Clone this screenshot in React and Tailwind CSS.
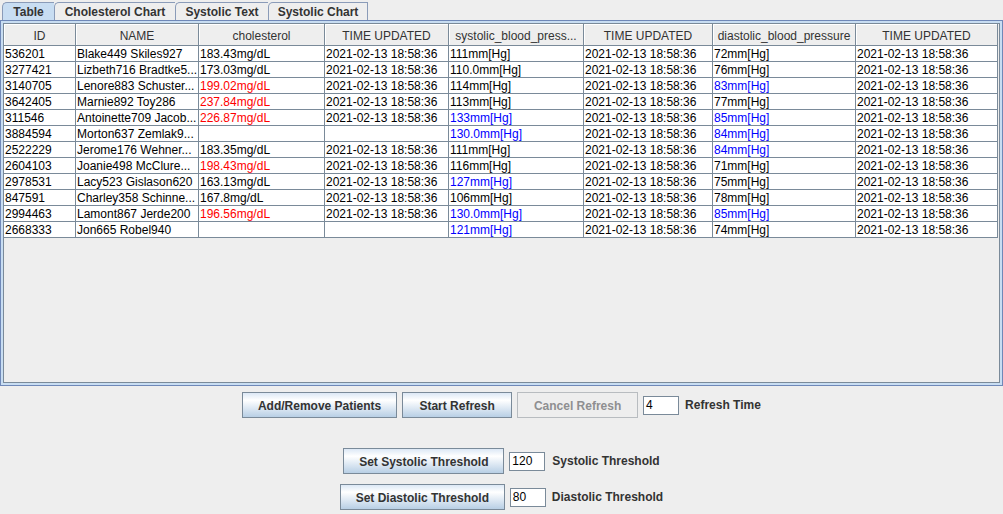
import React from "react";

const T = "2021-02-13 18:58:36";

const rows = [
  { id: "536201", name: "Blake449 Skiles927", chol: "183.43mg/dL", cRed: false, cTime: T, sys: "111mm[Hg]", sBlue: false, dia: "72mm[Hg]", dBlue: false },
  { id: "3277421", name: "Lizbeth716 Bradtke5...", chol: "173.03mg/dL", cRed: false, cTime: T, sys: "110.0mm[Hg]", sBlue: false, dia: "76mm[Hg]", dBlue: false },
  { id: "3140705", name: "Lenore883 Schuster...", chol: "199.02mg/dL", cRed: true, cTime: T, sys: "114mm[Hg]", sBlue: false, dia: "83mm[Hg]", dBlue: true },
  { id: "3642405", name: "Marnie892 Toy286", chol: "237.84mg/dL", cRed: true, cTime: T, sys: "113mm[Hg]", sBlue: false, dia: "77mm[Hg]", dBlue: false },
  { id: "311546", name: "Antoinette709 Jacob...", chol: "226.87mg/dL", cRed: true, cTime: T, sys: "133mm[Hg]", sBlue: true, dia: "85mm[Hg]", dBlue: true },
  { id: "3884594", name: "Morton637 Zemlak9...", chol: "", cRed: false, cTime: "", sys: "130.0mm[Hg]", sBlue: true, dia: "84mm[Hg]", dBlue: true },
  { id: "2522229", name: "Jerome176 Wehner...", chol: "183.35mg/dL", cRed: false, cTime: T, sys: "111mm[Hg]", sBlue: false, dia: "84mm[Hg]", dBlue: true },
  { id: "2604103", name: "Joanie498 McClure...", chol: "198.43mg/dL", cRed: true, cTime: T, sys: "116mm[Hg]", sBlue: false, dia: "71mm[Hg]", dBlue: false },
  { id: "2978531", name: "Lacy523 Gislason620", chol: "163.13mg/dL", cRed: false, cTime: T, sys: "127mm[Hg]", sBlue: true, dia: "75mm[Hg]", dBlue: false },
  { id: "847591", name: "Charley358 Schinne...", chol: "167.8mg/dL", cRed: false, cTime: T, sys: "106mm[Hg]", sBlue: false, dia: "78mm[Hg]", dBlue: false },
  { id: "2994463", name: "Lamont867 Jerde200", chol: "196.56mg/dL", cRed: true, cTime: T, sys: "130.0mm[Hg]", sBlue: true, dia: "85mm[Hg]", dBlue: true },
  { id: "2668333", name: "Jon665 Robel940", chol: "", cRed: false, cTime: "", sys: "121mm[Hg]", sBlue: true, dia: "74mm[Hg]", dBlue: false },
];

const headers = ["ID", "NAME", "cholesterol", "TIME UPDATED", "systolic_blood_press...", "TIME UPDATED", "diastolic_blood_pressure", "TIME UPDATED"];

const cols = "grid grid-cols-[72px_123px_126px_124px_135px_129px_143px_142px]";

function Cell({ children, color = "text-black" }) {
  return (
    <div className={`h-[16px] pt-[1px] leading-[15px] pl-[1px] bg-white border-r border-b border-[#7a8a99] whitespace-nowrap overflow-hidden ${color}`}>
      {children}
    </div>
  );
}

function Btn({ w, children, disabled = false }) {
  if (disabled) {
    return (
      <div className={`h-[26px] ${w} pt-[1px] flex items-center justify-center border border-[#b8bcc0] bg-[#eeeeee] text-[#8e8f91] font-bold`}>
        {children}
      </div>
    );
  }
  return (
    <button className={`h-[26px] ${w} pt-[1px] flex items-center justify-center border border-[#7a8a99] bg-linear-to-b from-[#dce8f5] via-white via-30% to-[#b8cfe5] text-[#333] font-bold`}>
      {children}
    </button>
  );
}

function Field({ value }) {
  return (
    <div className="h-[19px] w-[36px] bg-white border border-[#7a8a99] pl-[2px] leading-[17px] text-black">
      {value}
    </div>
  );
}

export default function App() {
  const tabs = [
    { label: "Table", w: "w-[52px]", sel: true },
    { label: "Cholesterol Chart", w: "w-[121px]" },
    { label: "Systolic Text", w: "w-[93px]" },
    { label: "Systolic Chart", w: "w-[100px] border-r" },
  ];

  return (
    <div className="w-[1003px] h-[514px] bg-[#eeeeee] font-['Liberation_Sans',Arial,sans-serif] text-[12px] overflow-hidden">
      {/* TABS */}
      <div className="h-[20px] flex items-end pl-[2px]">
        {tabs.map((t) => (
          <div
            key={t.label}
            className={`h-[18px] ${t.w} pt-[1px] flex items-center justify-center border-t border-l border-[#8a9bb8] rounded-tl-[5px] font-bold text-[#333] ${t.sel ? "bg-[#c8ddf2]" : "bg-[#eeeeee]"}`}
          >
            {t.label}
          </div>
        ))}
      </div>

      {/* TAB PANEL */}
      <div className="h-[366px] border border-[#6f88b8] bg-[#c8ddf2] p-[2px]">
        <div className="h-full border border-[#7a8a99] bg-[#eeeeee]">
          <div className={cols}>
            {headers.map((h, i) => (
              <div
                key={i}
                className="h-[22px] pt-[5px] leading-[15px] text-center text-[#333] bg-[#eeeeee] border-r border-b border-[#7a8a99] shadow-[inset_1px_1px_0_#ffffff] whitespace-nowrap overflow-hidden"
              >
                {h}
              </div>
            ))}
          </div>
          <div className={cols}>
            {rows.map((r) => (
              <React.Fragment key={r.id}>
                <Cell>{r.id}</Cell>
                <Cell>{r.name}</Cell>
                <Cell color={r.cRed ? "text-[#ff0000]" : "text-black"}>{r.chol}</Cell>
                <Cell>{r.cTime}</Cell>
                <Cell color={r.sBlue ? "text-[#0000ff]" : "text-black"}>{r.sys}</Cell>
                <Cell>{T}</Cell>
                <Cell color={r.dBlue ? "text-[#0000ff]" : "text-black"}>{r.dia}</Cell>
                <Cell>{T}</Cell>
              </React.Fragment>
            ))}
          </div>
        </div>
      </div>

      {/* CONTROLS */}
      <div className="mt-[6px] flex justify-center items-center gap-[5px]">
        <Btn w="w-[155px]">Add/Remove Patients</Btn>
        <Btn w="w-[110px]">Start Refresh</Btn>
        <Btn w="w-[121px]" disabled>Cancel Refresh</Btn>
        <Field value="4" />
        <span className="ml-[1px] font-bold text-[#333]">Refresh Time</span>
      </div>

      <div className="mt-[30px] flex justify-center items-center gap-[5px]">
        <Btn w="w-[161px]">Set Systolic Threshold</Btn>
        <Field value="120" />
        <span className="ml-[2px] font-bold text-[#333]">Systolic Threshold</span>
      </div>

      <div className="mt-[10px] flex justify-center items-center gap-[5px]">
        <Btn w="w-[165px]">Set Diastolic Threshold</Btn>
        <Field value="80" />
        <span className="ml-[1px] font-bold text-[#333]">Diastolic Threshold</span>
      </div>
    </div>
  );
}
